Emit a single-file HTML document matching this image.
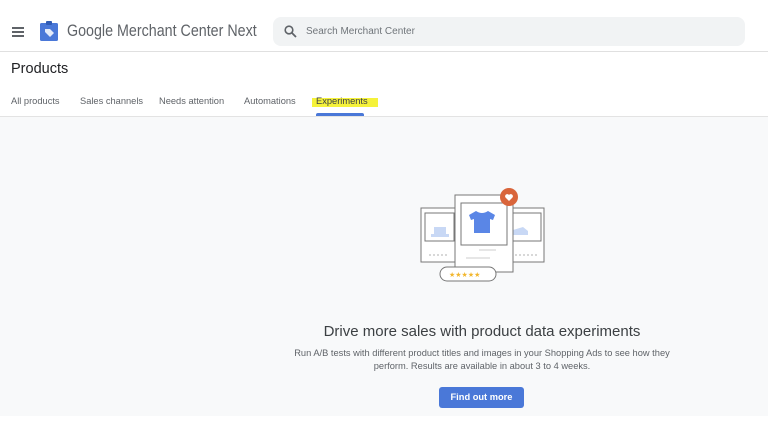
<!DOCTYPE html>
<html><head><style>
*{margin:0;padding:0;box-sizing:border-box}
body{width:768px;height:432px;overflow:hidden;background:#fff;font-family:"Liberation Sans",sans-serif;position:relative;color:#3c4043}
.a{position:absolute}
</style></head><body>
<div class="a" style="left:12px;top:27px;width:12px;height:2px;background:#5f6368;box-shadow:0 4px 0 #5f6368,0 8px 0 #5f6368"></div>
<svg class="a" style="left:39px;top:21px" width="20" height="21" viewBox="0 0 20 21"><rect x="1" y="2" width="18" height="18" rx="1.5" fill="#4a78d8"/><rect x="7" y="0" width="6" height="4" rx="1" fill="#2f5bb5"/><path d="M6 8l5 0 4 4-4 4-5-5z" fill="#fff" opacity=".85"/></svg>
<div class="a" style="left:67px;top:21px;font-size:17px;color:#5f6368;white-space:nowrap;transform:scaleX(0.84);transform-origin:0 0">Google Merchant Center Next</div>
<div class="a" style="left:273px;top:17px;width:472px;height:29px;background:#f1f3f4;border-radius:8px"></div>
<svg class="a" style="left:284px;top:25px" width="13" height="13" viewBox="0 0 13 13"><circle cx="5" cy="5" r="3.8" fill="none" stroke="#5f6368" stroke-width="1.6"/><path d="M8 8l4 4" stroke="#5f6368" stroke-width="1.8"/></svg>
<div class="a" style="left:306px;top:26px;font-size:10px;color:#70757a">Search Merchant Center</div>
<div class="a" style="left:0;top:51px;width:768px;height:1px;background:#e0e0e0"></div>
<div class="a" style="left:11px;top:61px;font-size:14.5px;color:#202124">Products</div>
<div class="a" style="top:96px;left:11px;font-size:9.3px;color:#5f6368">All products</div>
<div class="a" style="top:96px;left:80px;font-size:9.3px;color:#5f6368">Sales channels</div>
<div class="a" style="top:96px;left:159px;font-size:9.3px;color:#5f6368">Needs attention</div>
<div class="a" style="top:96px;left:244px;font-size:9.3px;color:#5f6368">Automations</div>
<div class="a" style="top:98px;left:312px;width:66px;height:9px;background:#f5f23a"></div>
<div class="a" style="top:96px;left:316px;font-size:9.3px;color:#3c4043">Experiments</div>
<div class="a" style="left:316px;top:113px;width:48px;height:3px;background:#4a78d8;border-radius:2px 2px 0 0"></div>
<div class="a" style="left:0;top:116px;width:768px;height:300px;background:#f8f9fa;border-top:1px solid #e3e3e3"></div>
<svg class="a" style="left:415px;top:185px" width="135" height="100" viewBox="415 185 135 100">
<rect x="421" y="208" width="37" height="54" fill="#fff" stroke="#777" stroke-width="1"/>
<rect x="425" y="213" width="29" height="28" fill="#fff" stroke="#777"/>
<path d="M431 234h18v3h-18zM434 227h12v7h-12z" fill="#c8d8f5"/>
<rect x="509" y="208" width="35" height="54" fill="#fff" stroke="#777"/>
<rect x="512" y="213" width="29" height="28" fill="#fff" stroke="#777"/>
<path d="M513 230l10-3 5 4h0v4h-15z" fill="#c8d8f5"/>
<path d="M429 255h20M515 255h22" stroke="#ccc" stroke-width="1.5" stroke-dasharray="2 2"/>
<rect x="455" y="195" width="58" height="77" fill="#fff" stroke="#777"/>
<rect x="461" y="203" width="46" height="42" fill="#fff" stroke="#777"/>
<path d="M476 211l-7 4 2 5 3-1v14h16v-14l3 1 2-5-7-4q-6 4-12 0z" fill="#5a86e6"/>
<path d="M479 250h17M466 258h24" stroke="#ddd" stroke-width="1.5"/>
<circle cx="509" cy="197" r="9" fill="#d9653b"/>
<path d="M509 201l-3.5-3.5a2 2 0 013.5-2.5a2 2 0 013.5 2.5z" fill="#fff"/>
<rect x="440" y="267" width="56" height="14" rx="7" fill="#fff" stroke="#777"/>
<g fill="#f2b72f" font-size="7" font-family="DejaVu Sans"><text x="449" y="277">★★★★★</text></g>
</svg>
<div class="a" style="left:0;width:964px;top:323px;text-align:center;font-size:15px;color:#3c4043">Drive more sales with product data experiments</div>
<div class="a" style="left:0;width:964px;top:347px;text-align:center;font-size:9.3px;line-height:12.5px;color:#5f6368">Run A/B tests with different product titles and images in your Shopping Ads to see how they<br>perform. Results are available in about 3 to 4 weeks.</div>
<div class="a" style="left:439px;top:387px;width:85px;height:21px;background:#4a78d8;border-radius:3px;color:#fff;font-size:9.3px;font-weight:bold;text-align:center;line-height:21px">Find out more</div>
</body></html>
